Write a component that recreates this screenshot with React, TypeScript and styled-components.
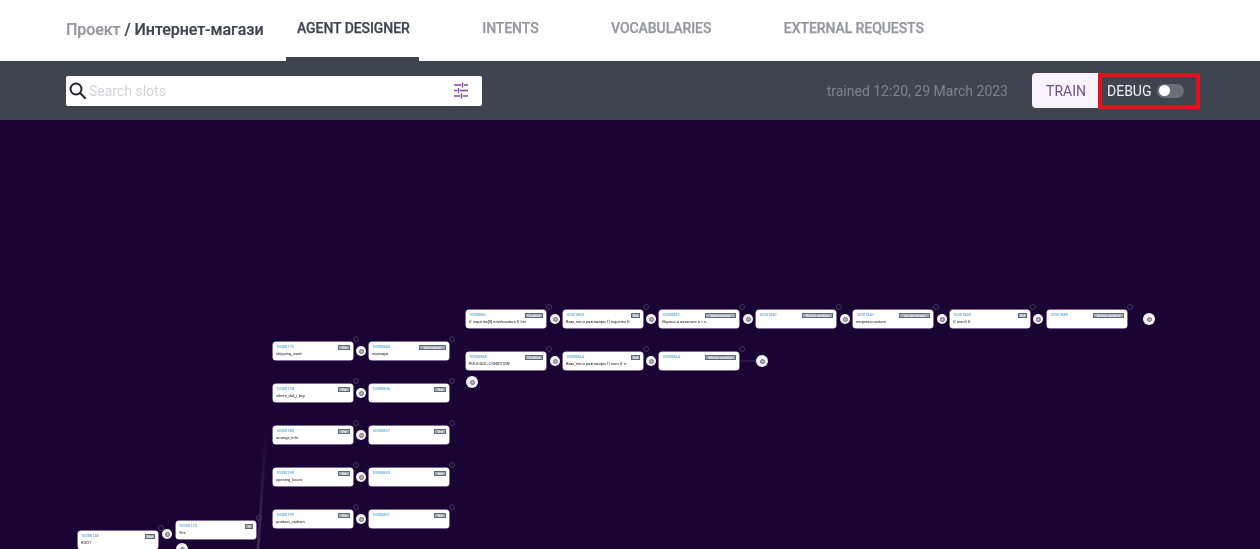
import styled, { createGlobalStyle } from "styled-components";

const GlobalStyle = createGlobalStyle`
    html, body {
        margin: 0;
        padding: 0;
        height: 100%;
        overflow: hidden;
        background: #1a0433;
        font-family: Roboto, "Noto Sans", sans-serif;
    }
    #root {
        height: 100%;
    }
`
const Page = styled.div`
    display: flex;
    flex-direction: column;
    height: 100%;
`
const Header = styled.header`
    display: flex;
    align-items: stretch;
    height: 61px;
    padding-left: 66px;
    background-color: #fff;
    filter: blur(0.35px);
`
const Breadcrumb = styled.div`
    width: 198px;
    margin-right: 22px;
    padding-top: 20px;
    font-size: 16px;
    line-height: 19px;
    font-weight: 500;
    letter-spacing: -0.05px;
    color: #3f444e;
    white-space: nowrap;
    -webkit-text-stroke: 0.2px currentColor;
`
const Muted = styled.span`
    color: #94979d;
`
const Tabs = styled.nav`
    display: flex;
    gap: 52.5px;
`
const Tab = styled.div<{ $active?: boolean }>`
    padding: 20px 9px 0 11px;
    font-size: 14px;
    line-height: 17px;
    font-weight: 500;
    letter-spacing: -0.07px;
    color: ${(p) => (p.$active ? "#3f444e" : "#94979d")};
    border-bottom: 4px solid ${(p) => (p.$active ? "#3f444e" : "transparent")};
    -webkit-text-stroke: 0.25px currentColor;
`
const Toolbar = styled.div`
    display: flex;
    align-items: center;
    height: 59px;
    padding-left: 66px;
    background-color: #3f444e;
    filter: blur(0.35px);
`
const Search = styled.div`
    display: flex;
    align-items: center;
    width: 416px;
    height: 30px;
    padding: 0 14px 0 3px;
    box-sizing: border-box;
    background-color: #fff;
    border-radius: 2px;
`
const SearchText = styled.span`
    flex: 1;
    margin-left: 3px;
    font-size: 14px;
    color: #d3d4d8;
`
const Trained = styled.span`
    margin-left: auto;
    margin-right: 24px;
    font-size: 14px;
    color: #7e838b;
`
const TrainButton = styled.button`
    width: 66px;
    height: 35px;
    padding: 0 0 0 2px;
    border: none;
    border-radius: 4px 0 0 4px;
    background-color: #f8f3fc;
    color: #6f5280;
    font-family: inherit;
    font-size: 14px;
`
const DebugBox = styled.div`
    display: flex;
    align-items: center;
    gap: 6px;
    width: 102px;
    height: 36px;
    margin-right: 60px;
    padding-left: 5px;
    box-sizing: border-box;
    border: 4px solid #e3101f;
    color: #f2f2f4;
    font-size: 14px;
`
const Toggle = styled.div`
    position: relative;
    width: 27px;
    height: 14px;
    border-radius: 7px;
    background-color: #6b7078;
`
const Knob = styled.div`
    position: absolute;
    left: 2px;
    top: 1.5px;
    width: 11px;
    height: 11px;
    border-radius: 50%;
    background-color: #fff;
`
const Canvas = styled.main`
    position: relative;
    flex: 1;
    overflow: hidden;
    background-color: #1a0433;
    filter: blur(0.5px);
`
const Edges = styled.svg`
    position: absolute;
    left: 0;
    top: 0;
`
const NodeCard = styled.div.attrs<{ $x: number; $y: number }>((p) => ({
    style: { left: p.$x, top: p.$y },
}))`
    position: absolute;
    width: 80px;
    height: 18px;
    box-sizing: border-box;
    padding: 2px 3px;
    background-color: #fff;
    border-radius: 3px;
    box-shadow: 0 0 0 0.5px #e2d4f0;
`
const NodeId = styled.div`
    font-size: 4px;
    line-height: 5px;
    color: #3d8ec9;
`
const NodeLabel = styled.div`
    margin-top: 2px;
    font-size: 4px;
    line-height: 5px;
    color: #222;
    white-space: nowrap;
`
const NodeType = styled.div<{ $w: number }>`
    position: absolute;
    top: 2.5px;
    right: 3px;
    width: ${(p) => p.$w}px;
    height: 5px;
    background-color: #a4adb7;
    border: 0.5px solid #5f6974;
    box-sizing: border-box;
    color: #fff;
    font-size: 3px;
    line-height: 4px;
    text-align: center;
    white-space: nowrap;
    overflow: hidden;
`
const AddDot = styled.div.attrs<{ $x: number; $y: number; $big?: boolean }>((p) => ({
    style: { left: p.$x, top: p.$y },
}))`
    position: absolute;
    width: ${(p) => (p.$big ? 12 : 10)}px;
    height: ${(p) => (p.$big ? 12 : 10)}px;
    margin: ${(p) => (p.$big ? -6 : -5)}px 0 0 ${(p) => (p.$big ? -6 : -5)}px;
    border-radius: 50%;
    background-color: #f4f2f6;
    display: flex;
    align-items: center;
    justify-content: center;
    &::after {
        content: "";
        width: 3px;
        height: 3px;
        border-radius: 50%;
        border: 1px solid #77707f;
        background-color: #b5afbc;
    }
`
const Collapse = styled.div.attrs<{ $x: number; $y: number }>((p) => ({
    style: { left: p.$x, top: p.$y },
}))`
    position: absolute;
    width: 6px;
    height: 6px;
    margin: -3px 0 0 -3px;
    border-radius: 50%;
    box-sizing: border-box;
    border: 1px solid #43375e;
`

interface FlowNode {
    x: number;
    y: number;
    id: string;
    label?: string;
    type: string;
    w: number;
}

const TOP = 120;

const nodes: FlowNode[] = [
    { x: 466, y: 310, id: "10000861", label: "{{ inquiries[0].interlocutors }} list", type: "Condition", w: 18 },
    { x: 563, y: 310, id: "10001803", label: "Вам, это и разговоры {{ inquiries }}", type: "Text", w: 9 },
    { x: 659, y: 310, id: "10000857", label: "Ищешь в каталоге и т.п.", type: "Send message", w: 31 },
    { x: 756, y: 310, id: "10001841", type: "Wait for condition", w: 31 },
    { x: 853, y: 310, id: "10001847", label: "empresa.custom", type: "Set slot request", w: 31 },
    { x: 950, y: 310, id: "10001849", label: "{{ result }}", type: "Text", w: 9 },
    { x: 1047, y: 310, id: "10001885", type: "Wait for condition", w: 31 },
    { x: 466, y: 352, id: "10000860", label: "RULE.DOC.CONDITION", type: "Condition", w: 18 },
    { x: 563, y: 352, id: "10000864", label: "Вам, это и разговоры {{ num }} тг", type: "Text", w: 9 },
    { x: 659, y: 352, id: "10000864", type: "Wait for condition", w: 31 },
    { x: 273, y: 342, id: "10000175", label: "shipping_used", type: "Slot", w: 12 },
    { x: 369, y: 342, id: "10000840", label: "mpesaya", type: "Send request", w: 27 },
    { x: 273, y: 384, id: "10000178", label: "where_did_i_buy", type: "Slot", w: 12 },
    { x: 369, y: 384, id: "10000836", type: "Text", w: 12 },
    { x: 273, y: 426, id: "10000180", label: "arrange_info", type: "Slot", w: 12 },
    { x: 369, y: 426, id: "10000837", type: "Text", w: 12 },
    { x: 273, y: 468, id: "10000190", label: "opening_hours", type: "Slot", w: 12 },
    { x: 369, y: 468, id: "10000833", type: "Text", w: 12 },
    { x: 273, y: 510, id: "10000199", label: "product_nudism", type: "Slot", w: 12 },
    { x: 369, y: 510, id: "10000831", type: "Text", w: 12 },
    { x: 176, y: 521, id: "10000173", label: "Yes", type: "If", w: 8 },
    { x: 78, y: 531, id: "10000145", label: "ROOT", type: "Start", w: 10 },
];

const dots: [number, number, boolean?][] = [
    [555, 319], [651, 319], [748, 319], [845, 319], [942, 319], [1038, 319], [1149, 319, true],
    [555, 361], [651, 361], [762, 361, true], [472, 382, true],
    [361, 351], [361, 393], [361, 435], [361, 477], [361, 519],
    [167, 534], [182, 549, true],
];

function App() {
    return (
        <Page>
            <GlobalStyle />
            <Header>
                <Breadcrumb>
                    <Muted>Проект</Muted> / Интернет-магази
                </Breadcrumb>
                <Tabs>
                    <Tab $active>AGENT DESIGNER</Tab>
                    <Tab>INTENTS</Tab>
                    <Tab>VOCABULARIES</Tab>
                    <Tab>EXTERNAL REQUESTS</Tab>
                </Tabs>
            </Header>
            <Toolbar>
                <Search>
                    <svg width="17" height="17" viewBox="0 0 17 17" fill="none" stroke="#23262c" strokeWidth="2">
                        <circle cx="7" cy="7" r="5.5" />
                        <path d="M11 11l5 5" strokeLinecap="round" />
                    </svg>
                    <SearchText>Search slots</SearchText>
                    <svg width="14" height="17" viewBox="0 0 14 17" stroke="#7d4a9e" strokeWidth="1.5" fill="none">
                        <path d="M0 3h7M10 3h4M8.5 0.5v5M0 8.5h3M6 8.5h8M4.500 6v5M0 14h6M9 14h5M7.500 11.500v5" />
                    </svg>
                </Search>
                <Trained>trained 12:20, 29 March 2023</Trained>
                <TrainButton>TRAIN</TrainButton>
                <DebugBox>
                    DEBUG
                    <Toggle>
                        <Knob />
                    </Toggle>
                </DebugBox>
            </Toolbar>
            <Canvas>
                <Edges width="1260" height="429" fill="none" stroke="#3a2a58">
                    <defs>
                        <linearGradient id="trunk" gradientUnits="userSpaceOnUse" x1="0" y1="310" x2="0" y2="429">
                            <stop offset="0" stopColor="#3a2a58" stopOpacity="0" />
                            <stop offset="1" stopColor="#3a2a58" />
                        </linearGradient>
                    </defs>
                    <path d="M266 310L258 429" strokeWidth="3" stroke="url(#trunk)" />
                    <path d="M159 535h3M172 534h4M256 530h5M353 351h3M366 351h3" />
                    <path d="M740 241h16" />
                </Edges>
                {nodes.map((n) => (
                    <NodeCard key={`${n.x}-${n.y}`} $x={n.x} $y={n.y - TOP}>
                        <NodeId>{n.id}</NodeId>
                        {n.label && <NodeLabel>{n.label}</NodeLabel>}
                        <NodeType $w={n.w}>{n.type}</NodeType>
                    </NodeCard>
                ))}
                {nodes.map((n) => (
                    <Collapse key={`c-${n.x}-${n.y}`} $x={n.x + 83} $y={n.y - TOP - 3} />
                ))}
                {dots.map(([x, y, big]) => (
                    <AddDot key={`${x}-${y}`} $x={x} $y={y - TOP} $big={big} />
                ))}
            </Canvas>
        </Page>
    );
}

export default App;
